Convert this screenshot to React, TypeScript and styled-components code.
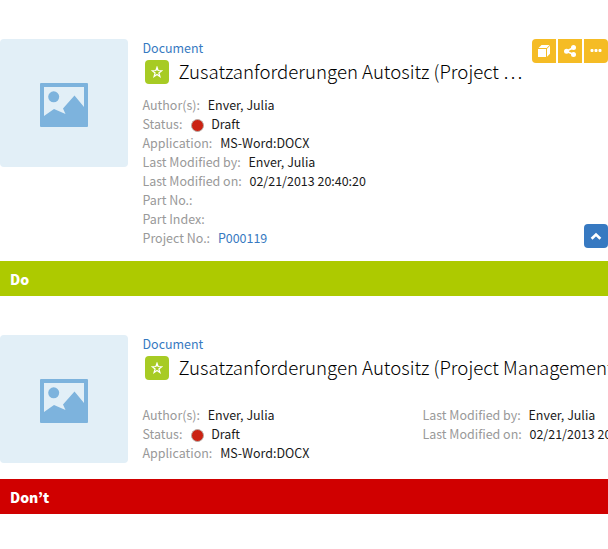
import React from "react";
import styled, { createGlobalStyle } from "styled-components";

const GlobalStyle = createGlobalStyle`
  body {
    margin: 0;
    background: #fff;
    color: #1a1a1a;
    font: 400 12.48px/19px "Noto Sans CJK SC", "Noto Sans", sans-serif;
    overflow: hidden;
  }
`;

const Page = styled.main`
  width: 100%;
  height: 549px;
  overflow: hidden;
`;

const Card = styled.section<{ $height: number }>`
  display: flex;
  align-items: flex-start;
  gap: 14.5px;
  height: ${(p) => p.$height}px;
  padding-top: 39px;
  box-sizing: border-box;
`;

const Thumbnail = styled.div`
  flex: none;
  display: grid;
  place-items: center;
  width: 128px;
  height: 128px;
  border-radius: 4px;
  background: #e2eff7;
  svg { display: block; margin-top: 3px; }
`;

const Content = styled.div`
  flex: 1;
  min-width: 0;
`;

const Header = styled.header`
  display: flex;
  justify-content: space-between;
  height: 48px;
`;

const Heading = styled.div`
  min-width: 0;
  flex: 1;
`;

const TypeLabel = styled.div`
  height: 21px;
  color: #3779c1;
`;

const TitleRow = styled.div`
  display: flex;
  align-items: center;
  height: 24px;
  padding-left: 2.5px;
  gap: 9.5px;
`;

const FavoriteButton = styled.button`
  flex: none;
  display: grid;
  place-items: center;
  width: 24px;
  height: 24px;
  padding: 0;
  border: 0;
  border-radius: 4px;
  background: #a7cb24;
`;

const Title = styled.h1<{ $truncate?: boolean }>`
  margin: 0 0 2px;
  width: ${(p) => (p.$truncate ? "345px" : "auto")};
  color: #000;
  font-size: 18.65px;
  font-weight: 300;
  line-height: 28px;
  white-space: nowrap;
`;

const Toolbar = styled.div`
  flex: none;
  display: flex;
  gap: 2px;
  height: 24px;
`;

const ToolButton = styled.button`
  display: grid;
  place-items: center;
  width: 24px;
  height: 24px;
  padding: 0;
  border: 0;
  background: #f5bc25;
  &:first-child { border-radius: 4px 0 0 4px; }
  &:last-child { border-radius: 0 4px 4px 0; }
`;

const Details = styled.div<{ $top: number }>`
  display: flex;
  align-items: flex-end;
  margin-top: ${(p) => p.$top}px;
`;

const Fields = styled.dl<{ $width?: number }>`
  margin: 0;
  flex: ${(p) => (p.$width ? `0 0 ${p.$width}px` : "1")};
  min-width: 0;
`;

const SideFields = styled(Fields)`
  align-self: flex-start;
`;

const Field = styled.div`
  display: flex;
  height: 19px;
  gap: 7.8px;
  white-space: nowrap;
`;

const Label = styled.dt`
  color: #999;
`;

const Value = styled.dd<{ $link?: boolean }>`
  display: flex;
  align-items: center;
  gap: 7px;
  margin: 0;
  color: ${(p) => (p.$link ? "#3779c1" : "#1a1a1a")};
`;

const StatusDot = styled.span`
  width: 11px;
  height: 11px;
  margin: 1px 0 0 1px;
  border: 1px solid #b9a8a2;
  border-radius: 50%;
  background: #cb2213;
`;

const CollapseButton = styled.button`
  flex: none;
  display: grid;
  place-items: center;
  width: 24px;
  height: 24px;
  padding: 0;
  border: 0;
  border-radius: 4px;
  background: #3779c1;
`;

const Verdict = styled.div<{ $tone: "do" | "dont" }>`
  height: 35px;
  padding: 1px 10px 0;
  box-sizing: border-box;
  background: ${(p) => (p.$tone === "do" ? "#adca00" : "#d00000")};
  color: #fff;
  font-family: "Noto Sans CJK KR", "Noto Sans", sans-serif;
  font-size: 14px;
  font-weight: 900;
  line-height: 35px;
`;

const PictureIcon = () => (
  <svg width="48" height="44" viewBox="0 0 48 44">
    <rect width="48" height="44" rx="1" fill="#7db3dd" />
    <path d="M4 4H44V24L34.5 12.5 23 25.5 25.5 31 14 26 4 33Z" fill="#e2eff7" />
    <circle cx="13.7" cy="13.8" r="5.5" fill="#7db3dd" />
  </svg>
);

const StarIcon = () => (
  <svg width="12" height="12" viewBox="0 0 12 12" fill="none" stroke="#fff" strokeWidth="1.25">
    <path d="M6 1.3 7.1 4.5 10.8 4.7 7.9 6.9 8.9 10.4 6 8.4 3.1 10.4 4.1 6.9 1.2 4.7 4.9 4.5Z" />
  </svg>
);

const BoxIcon = () => (
  <svg width="12" height="12" viewBox="0 0 12 12" fill="#fff">
    <path d="M0 4H8V12H0ZM.5 3 3.5 0H11.6L8.7 3ZM9 3.8 12 .8V8.8L9 11.8Z" />
  </svg>
);

const ShareIcon = () => (
  <svg width="12" height="12" viewBox="0 0 12 12" fill="#fff">
    <path d="M9.5 2.5 2.5 6.2 9.5 9.5" fill="none" stroke="#fff" strokeWidth="1.6" />
    <circle cx="9.5" cy="2.6" r="2.5" />
    <circle cx="2.5" cy="6.2" r="2.5" />
    <circle cx="9.5" cy="9.5" r="2.5" />
  </svg>
);

const MoreIcon = () => (
  <svg width="12" height="12" viewBox="0 0 12 12" fill="#fff">
    <rect x=".5" y="4" width="3" height="3" rx="1" />
    <rect x="4.5" y="4" width="3" height="3" rx="1" />
    <rect x="8.5" y="4" width="3" height="3" rx="1" />
  </svg>
);

const ChevronUpIcon = () => (
  <svg width="12" height="12" viewBox="0 0 12 12" fill="none" stroke="#fff" strokeWidth="2.6">
    <path d="M1.6 8.8 6 4.5 10.4 8.8" />
  </svg>
);

type FieldData = { label: string; value?: string; status?: boolean; link?: boolean };

const mainFields: FieldData[] = [
  { label: "Author(s):", value: "Enver, Julia" },
  { label: "Status:", value: "Draft", status: true },
  { label: "Application:", value: "MS-Word:DOCX" },
];

const modifiedFields: FieldData[] = [
  { label: "Last Modified by:", value: "Enver, Julia" },
  { label: "Last Modified on:", value: "02/21/2013 20:40:20" },
];

const partFields: FieldData[] = [
  { label: "Part No.:" },
  { label: "Part Index:" },
  { label: "Project No.:", value: "P000119", link: true },
];

const FieldList = ({ fields }: { fields: FieldData[] }) => (
  <>
    {fields.map((f) => (
      <Field key={f.label}>
        <Label>{f.label}</Label>
        <Value $link={f.link}>
          {f.status && <StatusDot />}
          {f.value}
        </Value>
      </Field>
    ))}
  </>
);

const DocumentHeading = ({ title, truncate }: { title: string; truncate?: boolean }) => (
  <Heading>
    <TypeLabel>Document</TypeLabel>
    <TitleRow>
      <FavoriteButton aria-label="Favorite"><StarIcon /></FavoriteButton>
      <Title $truncate={truncate}>{title}</Title>
    </TitleRow>
  </Heading>
);

export default function App() {
  return (
    <Page>
      <GlobalStyle />
      <Card $height={261}>
        <Thumbnail><PictureIcon /></Thumbnail>
        <Content>
          <Header>
            <DocumentHeading title="Zusatzanforderungen Autositz (Project …" truncate />
            <Toolbar>
              <ToolButton aria-label="Structure"><BoxIcon /></ToolButton>
              <ToolButton aria-label="Share"><ShareIcon /></ToolButton>
              <ToolButton aria-label="More"><MoreIcon /></ToolButton>
            </Toolbar>
          </Header>
          <Details $top={9}>
            <Fields>
              <FieldList fields={[...mainFields, ...modifiedFields, ...partFields]} />
            </Fields>
            <CollapseButton aria-label="Collapse"><ChevronUpIcon /></CollapseButton>
          </Details>
        </Content>
      </Card>
      <Verdict $tone="do">Do</Verdict>
      <Card $height={183}>
        <Thumbnail><PictureIcon /></Thumbnail>
        <Content>
          <Header>
            <DocumentHeading title="Zusatzanforderungen Autositz (Project Management" />
          </Header>
          <Details $top={23}>
            <Fields $width={280}><FieldList fields={mainFields} /></Fields>
            <SideFields><FieldList fields={modifiedFields} /></SideFields>
          </Details>
        </Content>
      </Card>
      <Verdict $tone="dont">Don’t</Verdict>
    </Page>
  );
}
